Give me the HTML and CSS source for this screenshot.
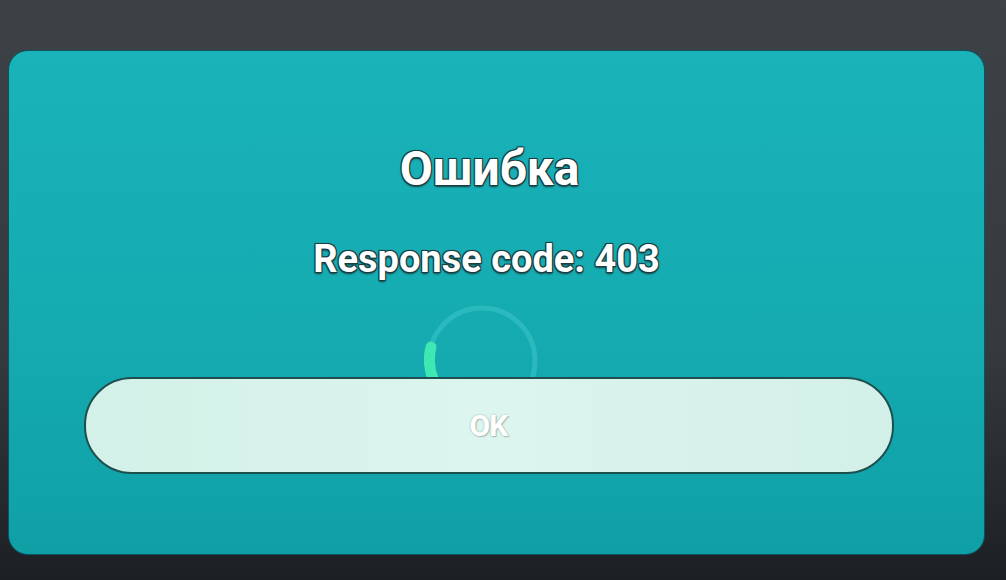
FILE: index.html
```html
<!DOCTYPE html>
<html lang="ru">
<head>
    <meta charset="UTF-8">
    <meta name="viewport" content="width=device-width, initial-scale=1.0">
    <title>Ошибка</title>
    <link rel="stylesheet" href="styles.css">
</head>
<body>
    <div class="dialog">
        <h1 class="title">Ошибка</h1>
        <p class="message">Response code: 403</p>

        <div class="spinner">
            <svg width="116" height="116" viewBox="0 0 116 116">
                <circle cx="58" cy="58" r="53" fill="none" stroke="#38c4c6" stroke-width="5" opacity="0.6"/>
                <path d="M7 44 A53 53 0 0 0 9 76" fill="none" stroke="#3fe8b2" stroke-width="11" stroke-linecap="round"/>
            </svg>
        </div>

        <button class="ok-btn">OK</button>
    </div>
</body>
</html>
```

FILE: styles.css
```css
* {
    margin: 0;
    padding: 0;
    box-sizing: border-box;
}

body {
    font-family: Roboto, 'Liberation Sans', sans-serif;
    background: linear-gradient(180deg, #3d4246 0%, #353a3e 60%, #1c2024 100%);
    height: 100vh;
    overflow: hidden;
    padding: 50px 20px 0 8px;
}

.dialog {
    width: 977px;
    height: 505px;
    background: linear-gradient(180deg, #19b3b9 0%, #14aab0 60%, #0fa0a6 100%);
    border: 1px solid #0c5560;
    border-radius: 20px;
    display: flex;
    flex-direction: column;
    align-items: center;
    padding-top: 90px;
}

.title {
    font-size: 48px;
    line-height: 56px;
    font-weight: 700;
    color: #fff;
    margin-left: -14px;
    text-shadow: 0 0 2px #1a3e40, 1px 1px 0 #1a3e40, -1px -1px 0 #1a3e40, 1px -1px 0 #1a3e40, -1px 1px 0 #1a3e40, 0 2px 2px #1a3e40;
}

.message {
    font-size: 38px;
    line-height: 44px;
    font-weight: 700;
    color: #fff;
    margin-top: 40px;
    margin-left: -20px;
    text-shadow: 0 0 2px #1a3e40, 1px 1px 0 #1a3e40, -1px -1px 0 #1a3e40, 1px -1px 0 #1a3e40, -1px 1px 0 #1a3e40, 0 2px 2px #1a3e40;
}

.spinner {
    width: 116px;
    height: 116px;
    margin-top: 22px;
    margin-left: -30px;
}

.ok-btn {
    position: relative;
    width: 810px;
    height: 97px;
    margin-top: -42px;
    margin-left: -16px;
    border: 2px solid #1d4f4e;
    border-radius: 48px;
    background: linear-gradient(90deg, #d3f1e8 0%, #dcf5ee 50%, #d3f0e8 100%);
    font-family: Roboto, 'Liberation Sans', sans-serif;
    font-size: 30px;
    font-weight: 700;
    color: #fff;
    letter-spacing: -1px;
    text-shadow: 0 0 2px #9fb4ae, 1px 1px 1px #a8bdb7;
}
```
